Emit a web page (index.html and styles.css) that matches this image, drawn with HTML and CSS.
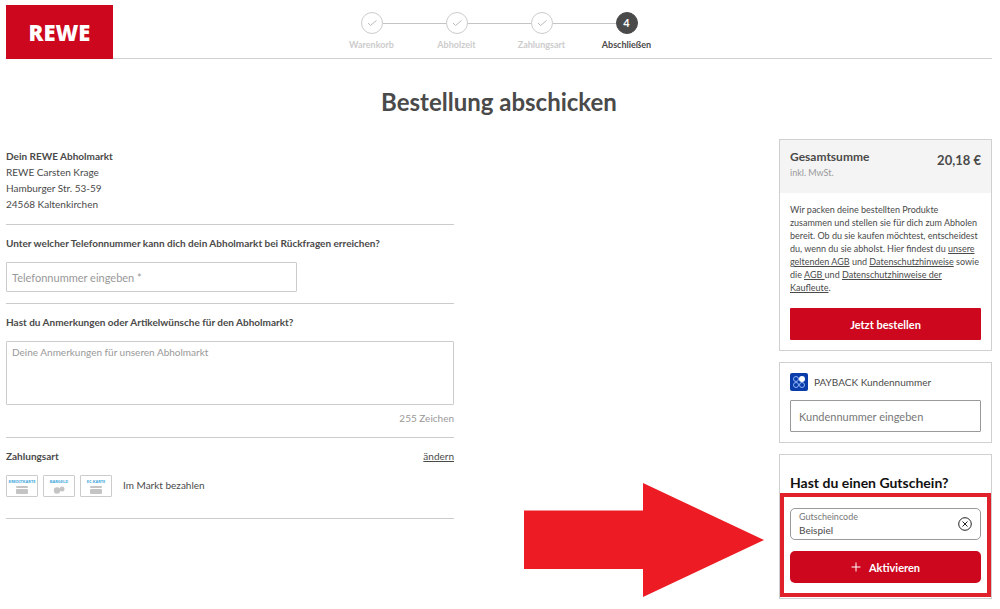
FILE: index.html
```
<!DOCTYPE html>
<html lang="de">
<head>
    <meta charset="UTF-8">
    <meta name="viewport" content="width=device-width, initial-scale=1.0">
    <title>REWE - Bestellung abschicken</title>
    <link rel="stylesheet" href="styles.css">
</head>
<body>
    <header class="header">
        <a class="logo" href="#">REWE</a>
        <ol class="steps">
            <li class="step">
                <div class="step-line"><span class="step-circle"><svg width="12" height="12" viewBox="0 0 12 12"><path d="M2 6 4.500 8.500 10.500 3.500"/></svg></span></div>
                Warenkorb
            </li>
            <li class="step">
                <div class="step-line"><span class="step-circle"><svg width="12" height="12" viewBox="0 0 12 12"><path d="M2 6 4.500 8.500 10.500 3.500"/></svg></span></div>
                Abholzeit
            </li>
            <li class="step">
                <div class="step-line"><span class="step-circle"><svg width="12" height="12" viewBox="0 0 12 12"><path d="M2 6 4.500 8.500 10.500 3.500"/></svg></span></div>
                Zahlungsart
            </li>
            <li class="step active">
                <div class="step-line"><span class="step-circle">4</span></div>
                Abschließen
            </li>
        </ol>
    </header>

    <h1>Bestellung abschicken</h1>

    <div class="content">
        <main class="details">
            <section class="block">
                <h2>Dein REWE Abholmarkt</h2>
                <address>
                    REWE Carsten Krage<br>
                    Hamburger Str. 53-59<br>
                    24568 Kaltenkirchen
                </address>
            </section>

            <section class="block">
                <label class="question" for="phone">Unter welcher Telefonnummer kann dich dein Abholmarkt bei Rückfragen erreichen?</label>
                <input class="phone" type="tel" id="phone" placeholder="Telefonnummer eingeben *">
            </section>

            <section class="block">
                <label class="question" for="notes">Hast du Anmerkungen oder Artikelwünsche für den Abholmarkt?</label>
                <textarea id="notes" maxlength="255" placeholder="Deine Anmerkungen für unseren Abholmarkt"></textarea>
                <p class="counter">255 Zeichen</p>
            </section>

            <section class="block payment">
                <div class="payment-head">
                    <h2>Zahlungsart</h2>
                    <a href="#">ändern</a>
                </div>
                <div class="payment-body">
                    <span class="pay-card">KREDITKARTE
                        <svg width="12" height="8" viewBox="0 0 12 8"><rect width="12" height="2" rx="1"/><rect y="3" width="12" height="5" rx="1"/></svg>
                    </span>
                    <span class="pay-card">BARGELD
                        <svg width="12" height="8" viewBox="0 0 12 8"><circle cx="4" cy="4.500" r="3.200"/><circle cx="9" cy="3" r="2.500"/></svg>
                    </span>
                    <span class="pay-card">EC-KARTE
                        <svg width="12" height="8" viewBox="0 0 12 8"><rect width="12" height="2" rx="1"/><rect y="3" width="12" height="5" rx="1"/></svg>
                    </span>
                    <span class="pay-text">Im Markt bezahlen</span>
                </div>
            </section>
        </main>

        <aside class="sidebar">
            <section class="card summary">
                <div class="total">
                    <div>
                        <h2>Gesamtsumme</h2>
                        <small>inkl. MwSt.</small>
                    </div>
                    <strong>20,18 €</strong>
                </div>
                <div class="order">
                    <p>Wir packen deine bestellten Produkte zusammen und stellen sie für dich zum Abholen bereit. Ob du sie kaufen möchtest, entscheidest du, wenn du sie abholst. Hier findest du <a href="#">unsere geltenden AGB</a> und <a href="#">Datenschutzhinweise</a> sowie die <a href="#">AGB </a>und <a href="#">Datenschutzhinweise der Kaufleute</a>.</p>
                    <button class="btn" type="submit">Jetzt bestellen</button>
                </div>
            </section>

            <section class="card payback">
                <label for="payback">
                    <svg width="18" height="18" viewBox="0 0 18 18">
                        <rect width="18" height="18" rx="2" fill="#0a3caa"/>
                        <g fill="none" stroke="#8fb4f5">
                            <circle cx="6" cy="6" r="2.5"/>
                            <circle cx="6" cy="12" r="2.5"/>
                            <circle cx="12" cy="12" r="2.5"/>
                        </g>
                        <circle cx="12" cy="6" r="3" fill="#fff"/>
                    </svg>
                    PAYBACK Kundennummer
                </label>
                <input type="text" id="payback" placeholder="Kundennummer eingeben">
            </section>

            <section class="card voucher">
                <h2>Hast du einen Gutschein?</h2>
                <div class="voucher-form">
                    <div class="voucher-field">
                        <div class="voucher-input">
                            <label for="code">Gutscheincode</label>
                            <input type="text" id="code" value="Beispiel">
                        </div>
                        <button class="clear" type="button" aria-label="Löschen">
                            <svg width="14" height="14" viewBox="0 0 14 14"><circle cx="7" cy="7" r="6.3"/><path d="m4.5 4.5 5 5m0-5-5 5"/></svg>
                        </button>
                    </div>
                    <button class="btn btn-round" type="button">
                        <svg width="10" height="10" viewBox="0 0 10 10"><path d="M5 .5v9M.5 5h9"/></svg>
                        Aktivieren
                    </button>
                    <svg class="arrow" width="242" height="116" viewBox="0 0 242 116"><path d="M1 28.500H120V1L241 58 120 115V87H1z"/></svg>
                </div>
            </section>
        </aside>
    </div>
</body>
</html>
```
FILE: styles.css
```
* { box-sizing: border-box; }
body {
    margin: 5px 8px 0 6px;
    font-family: Lato, "Liberation Sans", sans-serif;
    font-size: 10px;
    line-height: 16px;
    color: #4a4a4a;
    background: #fff;
}
h1, h2, p, ol { margin: 0; padding: 0; }
h2 { font-size: 10px; }
a { color: inherit; }
address { font-style: normal; }
input, textarea, button { font-family: inherit; font-size: 10px; color: inherit; }
input, textarea { border: 1px solid #ccc; border-radius: 1px; background: #fff; }
::placeholder { color: #999; opacity: 1; }

/* Header */
.header {
    display: grid;
    grid-template-columns: 1fr auto 1fr;
    align-items: start;
    border-bottom: 1px solid #d0d0d0;
}
.logo {
    width: 107px;
    margin-bottom: -1px;
    line-height: 54px;
    text-align: center;
    font-family: "Noto Sans", sans-serif;
    font-size: 22px;
    font-weight: 900;
    text-decoration: none;
    color: #fff;
    background: #cc071e;
}
.steps { display: flex; margin-top: 7px; list-style: none; }
.step { width: 85px; font-size: 9px; font-weight: bold; text-align: center; color: #ccc; }
.step-line { display: flex; align-items: center; margin-bottom: 3px; }
.step-line::before, .step-line::after { content: ""; flex: 1; height: 1px; background: #c4c4c4; }
.step:first-child .step-line::before, .step:last-child .step-line::after { background: none; }
.step-circle {
    display: flex;
    align-items: center;
    justify-content: center;
    width: 22px;
    height: 22px;
    border: 1px solid #ccc;
    border-radius: 50%;
}
.step-circle svg { fill: none; stroke: #bbb; }
.active { color: #4a4a4a; }
.active .step-circle { border-color: #4a4a4a; font-size: 11px; color: #fff; background: #4a4a4a; }

h1 { margin: 27px 0 21px; font-size: 24px; line-height: 32px; text-align: center; }

/* Columns */
.content { display: flex; justify-content: space-between; align-items: flex-start; }
.details { width: 448px; padding-top: 9px; }
.sidebar { display: flex; flex-direction: column; gap: 11px; width: 213px; }

.block { padding: 10px 0 11px; border-bottom: 1px solid #ccc; }
.block:first-child { padding: 0 0 12px; }
.question { display: block; margin-bottom: 11px; font-weight: bold; }
.phone { display: block; width: 65%; height: 30px; padding: 0 5px; font-size: 11px; }
textarea { display: block; width: 100%; height: 64px; padding: 2px 5px; line-height: 16px; resize: none; }
.counter { margin-top: 5px; text-align: right; color: #999; }
.payment { padding-bottom: 21px; }
.payment-head { display: flex; justify-content: space-between; margin-bottom: 11px; }
.payment-body { display: flex; gap: 5px; }
.pay-card {
    display: flex;
    flex-direction: column;
    align-items: center;
    gap: 2px;
    width: 32px;
    height: 22px;
    padding-top: 3px;
    border: 1px solid #ccc;
    border-radius: 1px;
    font-family: "Noto Sans", sans-serif;
    font-size: 4px;
    font-weight: bold;
    line-height: 5px;
    color: #3fa9dd;
}
.pay-card svg { fill: #c4c4c4; }
.pay-text { margin-left: 6px; line-height: 20px; }

/* Sidebar */
.card { padding: 10px; border: 1px solid #d0d0d0; }
.summary { padding: 0; }
.total { display: flex; justify-content: space-between; padding: 9px 10px 12px; background: #f4f4f4; }
.total h2 { font-size: 12px; }
.total small { display: block; font-size: 9px; color: #999; }
.total strong { font-size: 13px; line-height: 23px; }
.order { padding: 10px; }
.order p { margin-bottom: 14px; font-size: 9px; line-height: 13px; }
.btn {
    display: flex;
    align-items: center;
    justify-content: center;
    gap: 8px;
    width: 100%;
    height: 32px;
    border: 0;
    border-radius: 1px;
    font-size: 11px;
    font-weight: bold;
    color: #fff;
    background: #cc071e;
    cursor: pointer;
}
.btn-round { border-radius: 5px; }
.btn svg { fill: none; stroke: #fff; }
.payback label { display: flex; align-items: center; gap: 6px; margin-bottom: 9px; }
.payback input { display: block; width: 100%; height: 32px; padding: 0 8px; font-size: 11px; border-color: #999; }
.payback ::placeholder { color: #777; }
.voucher { padding-top: 20px; padding-bottom: 15px; }
.voucher h2 { margin-bottom: 17px; font-size: 14px; color: #111; }
.voucher-form { position: relative; }
.voucher-field {
    display: flex;
    align-items: center;
    height: 32px;
    margin-bottom: 11px;
    padding: 0 8px;
    border: 1px solid #999;
    border-radius: 5px;
}
.voucher-input { flex: 1; }
.voucher-input label { display: block; font-size: 9px; line-height: 12px; color: #777; }
.voucher-input input { display: block; width: 100%; height: 14px; padding: 0; border: 0; }
.clear { display: flex; padding: 0; border: 0; background: none; cursor: pointer; }
.clear svg { fill: none; stroke: #222; }

/* Marker around the voucher form */
.voucher-form::before {
    content: "";
    position: absolute;
    inset: -15px -10px -14px;
    border: 4px solid #e0202a;
    pointer-events: none;
}
.arrow { position: absolute; right: calc(100% + 25px); top: -26px; fill: #ed1c24; }
```
